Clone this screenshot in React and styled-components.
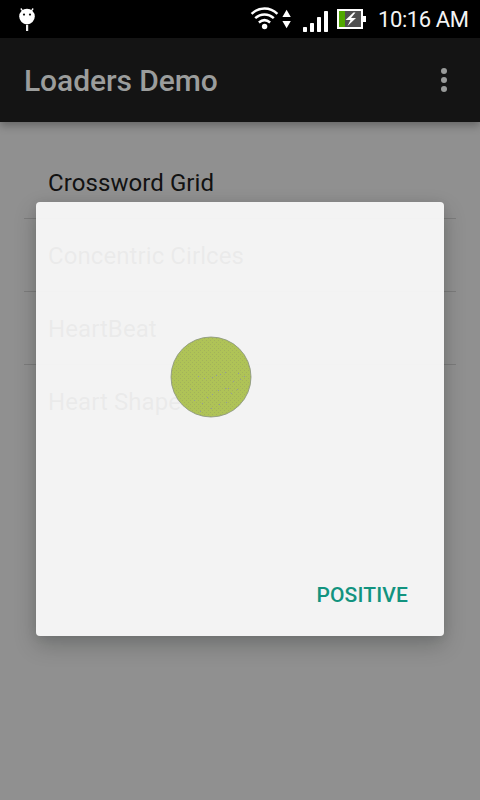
import React from "react";
import styled, { createGlobalStyle } from "styled-components";

const GlobalStyle = createGlobalStyle`
  * { box-sizing: border-box; }
  body { margin: 0; background: #909090; font-family: Roboto, sans-serif; }
`;

const Screen = styled.div`
  position: relative;
  display: flex;
  flex-direction: column;
  width: 480px;
  height: 800px;
  overflow: hidden;
  background: #909090;
`;

const StatusBar = styled.header`
  display: flex;
  align-items: center;
  justify-content: space-between;
  height: 38px;
  flex: none;
  background: #000;
  color: #f4f4f4;
`;

const StatusIcons = styled.svg`
  display: block;
  flex: none;
`;

const StatusGroup = styled.div`
  display: flex;
  align-items: center;
  padding-right: 12px;
`;

const Clock = styled.time`
  width: 90px;
  margin-left: 12px;
  margin-top: 1px;
  font-size: 22px;
  letter-spacing: -0.4px;
  line-height: 38px;
  white-space: nowrap;
`;

const AppBar = styled.div`
  display: flex;
  align-items: center;
  justify-content: space-between;
  flex: none;
  height: 84px;
  padding: 2px 33px 0 24px;
  background: #141414;
  box-shadow: 0 4px 8px rgba(0, 0, 0, 0.28);
`;

const Title = styled.h1`
  margin: 0;
  font-size: 30px;
  font-weight: 500;
  letter-spacing: -0.08px;
  line-height: 40px;
  color: #9b9d9c;
`;

const MenuButton = styled.button`
  display: flex;
  width: 6px;
  height: 24px;
  padding: 0;
  margin-top: -2px;
  border: 0;
  flex-direction: column;
  justify-content: space-between;
  background: none;
`;

const Dot = styled.span`
  width: 6px;
  height: 6px;
  border-radius: 50%;
  background: #999b9a;
`;

const List = styled.ul`
  list-style: none;
  margin: 0;
  padding: 24px 24px 0;
`;

const ListItem = styled.li`
  height: 73px;
  padding-left: 24px;
  border-bottom: 1px solid #7c7c7c;
  font-size: 24px;
  letter-spacing: 0.08px;
  line-height: 74px;
  color: #121212;

  &:last-child { border-bottom: 0; }
`;

const Dialog = styled.section`
  position: absolute;
  left: 36px;
  top: 202px;
  display: flex;
  flex-direction: column;
  width: 408px;
  height: 434px;
  border-radius: 4px;
  background: rgba(251, 251, 251, 0.93);
  box-shadow: 0 9px 22px rgba(0, 12, 8, 0.22), 0 1px 10px rgba(0, 12, 8, 0.08);
`;

const Loader = styled.div`
  display: flex;
  flex: 1;
  padding: 134px 0 0 134px;
`;

const Actions = styled.div`
  display: flex;
  justify-content: flex-end;
  height: 82px;
  padding: 20px 36px 0 0;
`;

const Action = styled.button`
  height: 42px;
  padding: 0;
  border: 0;
  background: none;
  color: #12937f;
  font: 500 21px/42px Roboto, sans-serif;
  letter-spacing: 0.15px;
`;

const items = ["Crossword Grid", "Concentric Cirlces", "HeartBeat", "Heart Shape"];

const specks = [
  [28, 40], [34, 42], [42, 41], [46, 39], [50, 38], [55, 36], [68, 37],
  [74, 40], [70, 43], [63, 45], [55, 52], [48, 54], [58, 52], [20, 53],
  [24, 64], [37, 61], [32, 67], [42, 58], [67, 53], [61, 57], [49, 68],
  [41, 72], [56, 66], [30, 75],
];

function DebugIcon() {
  return (
    <StatusIcons width="54" height="38" viewBox="0 0 54 38">
      <path d="M20.8 8.5l2.4 3.2M33.2 8.5l-2.4 3.2" stroke="#fff" strokeWidth="1.3" />
      <circle cx="27" cy="16.6" r="7.8" fill="#fff" />
      <path d="M26 25h2.2v6H26z" fill="#eee" />
      <circle cx="24" cy="14.6" r="1.1" fill="#111" />
      <circle cx="30" cy="14.6" r="1.1" fill="#111" />
    </StatusIcons>
  );
}

function ConnectionIcons() {
  return (
    <StatusIcons width="116" height="38" viewBox="250 0 116 38">
      <g fill="none" stroke="#fff" strokeWidth="2.5">
        <path d="M251.6 13.8c7.4-7.1 18.4-7.1 25.8 0" />
        <path d="M255.2 18.2c5.6-5.1 13-5.1 18.6 0" />
        <path d="M258.9 22.5c3.7-3.1 7.5-3.1 11.2 0" />
      </g>
      <circle cx="264.6" cy="26.5" r="2.7" fill="#fff" />
      <path d="M282.4 17l4.2-7.3 4.2 7.3zM282.4 21h8.4l-4.2 7.3z" fill="#fff" />
      <g fill="#fff">
        <rect x="303" y="27" width="4" height="5" rx=".7" />
        <rect x="310" y="23" width="4" height="9" rx=".7" />
        <rect x="317" y="17" width="4" height="15" rx=".7" />
        <rect x="324" y="11" width="4" height="21" rx=".7" />
      </g>
      <path d="M337 9h26v7h3v6h-3v7h-26z" fill="#fff" />
      <path d="M339 11h22v16h-22z" fill="#505050" />
      <path d="M339 11h6v16h-6z" fill="#50a800" />
      <path d="M353.5 12.5l-8 7.5h5l-3 6 8.5-8h-5l4.5-5.5z" fill="#fff" />
    </StatusIcons>
  );
}

function LoadingCircle() {
  return (
    <StatusIcons width="82" height="82" viewBox="0 0 82 82">
      <defs>
        <pattern id="grain" width="4" height="4" patternUnits="userSpaceOnUse">
          <rect width="4" height="4" fill="#afc357" />
          <path d="M0 0h1v1H0zM2 2h1v1H2z" fill="#a3b25b" />
        </pattern>
      </defs>
      <circle cx="41" cy="41" r="40" fill="url(#grain)" stroke="#87917b" strokeWidth=".8" />
      {specks.map(([x, y]) => (
        <rect key={`${x}-${y}`} x={x} y={y} width="1" height="1" fill="#9298a0" />
      ))}
    </StatusIcons>
  );
}

export default function App() {
  return (
    <>
      <GlobalStyle />
      <Screen>
        <StatusBar>
          <DebugIcon />
          <StatusGroup>
            <ConnectionIcons />
            <Clock>10:16 AM</Clock>
          </StatusGroup>
        </StatusBar>
        <AppBar>
          <Title>Loaders Demo</Title>
          <MenuButton aria-label="More options">
            <Dot />
            <Dot />
            <Dot />
          </MenuButton>
        </AppBar>
        <List>
          {items.map((item) => (
            <ListItem key={item}>{item}</ListItem>
          ))}
        </List>
        <Dialog role="dialog">
          <Loader>
            <LoadingCircle />
          </Loader>
          <Actions>
            <Action>POSITIVE</Action>
          </Actions>
        </Dialog>
      </Screen>
    </>
  );
}
